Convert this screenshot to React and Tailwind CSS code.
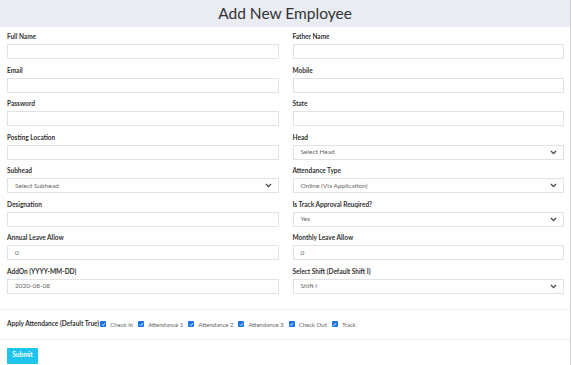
import React from "react";

const Chevron = () => (
  <svg width="7" height="5" viewBox="0 0 7 5" fill="none">
    <path d="M1 1 L3.5 3.6 L6 1" stroke="#444" strokeWidth="1.3" />
  </svg>
);

const Field = ({ label, value, select }) => (
  <div>
    <div className="text-[6.5px] leading-[10px] font-bold text-[#333] mb-[2px]">{label}</div>
    <div className="h-[15px] border border-[#dfe2e6] bg-white flex items-center justify-between pl-[7px] pr-[6px] text-[6.5px] text-[#666]">
      <span>{value}</span>
      {select && <Chevron />}
    </div>
  </div>
);

const Check = ({ label }) => (
  <div className="flex items-center gap-[4px]">
    <span className="w-[6px] h-[6px] bg-[#1a73e8] rounded-[1px] flex items-center justify-center">
      <svg width="5" height="5" viewBox="0 0 5 5">
        <path d="M1 2.6 L2 3.6 L4 1.2" stroke="white" strokeWidth="0.9" fill="none" />
      </svg>
    </span>
    <span className="text-[6px] text-[#666]">{label}</span>
  </div>
);

const App = () => {
  const fields = [
    { label: "Full Name" },
    { label: "Father Name" },
    { label: "Email" },
    { label: "Mobile" },
    { label: "Password" },
    { label: "State" },
    { label: "Posting Location" },
    { label: "Head", value: "Select Head", select: true },
    { label: "Subhead", value: "Select Subhead", select: true },
    { label: "Attendance Type", value: "Online (Via Application)", select: true },
    { label: "Designation" },
    { label: "Is Track Approval Reuqired?", value: "Yes", select: true },
    { label: "Annual Leave Allow", value: "0" },
    { label: "Monthly Leave Allow", value: "0" },
    { label: "AddOn (YYYY-MM-DD)", value: "2020-08-08" },
    { label: "Select Shift (Default Shift I)", value: "Shift I", select: true },
  ];

  return (
    <div
      className="w-[571px] h-[365px] overflow-hidden bg-white border-r border-[#cfcfcf]"
      style={{ fontFamily: "Lato, 'Open Sans', sans-serif" }}
    >
      <div className="h-[27px] bg-[#e9ecf3] flex items-center justify-center">
        <h1 className="text-[15.5px] text-[#333] pt-[1px]">Add New Employee</h1>
      </div>

      <div className="grid grid-cols-2 gap-x-[14px] gap-y-[6.5px] pl-[7px] pr-[6px] pt-[5px]">
        {fields.map((f) => (
          <Field key={f.label} {...f} />
        ))}
      </div>

      <div className="mt-[15px] border-t border-[#eceef0]" />

      <div className="flex items-center h-[29px] px-[7px] gap-[5px]">
        <span className="text-[6.5px] font-bold text-[#333] -mr-[4px]">Apply Attendance (Default True)</span>
        <Check label="Check In" />
        <Check label="Attendance 1" />
        <Check label="Attendance 2" />
        <Check label="Attendance 3" />
        <Check label="Check Out" />
        <Check label="Track" />
      </div>

      <div className="border-t border-[#eceef0]" />

      <div className="flex px-[7px] pt-[8px]">
        <button className="h-[16px] w-[31px] bg-[#1ec3ee] text-white text-[6.5px] font-bold leading-none rounded-[1px]">
          Submit
        </button>
      </div>
    </div>
  );
};

export default App;
